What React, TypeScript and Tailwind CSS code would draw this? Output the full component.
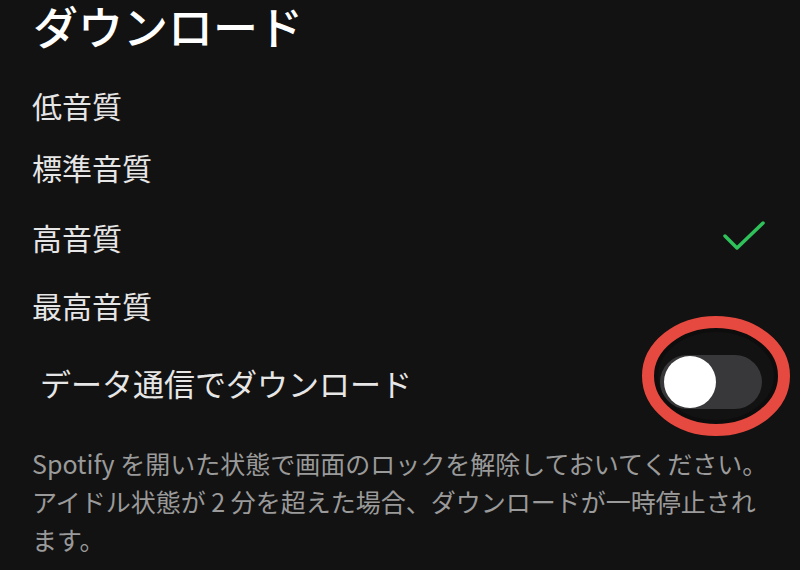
const font = {
	fontFamily: '"Noto Sans CJK JP", "Noto Sans", sans-serif',
};

const QualityRow = ({
	label,
	height,
	checked,
}: {
	label: string;
	height: string;
	checked?: boolean;
}) => (
	<div className={`flex items-center justify-between pr-[34px] ${height}`}>
		<span className="text-[30px] leading-none text-[#e6e6e6]">{label}</span>
		{checked ? (
			<svg width="44" height="34" viewBox="0 0 44 34" fill="none">
				<path
					d="M3 16 L15 28 L41 3"
					stroke="#2fc15a"
					strokeWidth="3.5"
					strokeLinecap="round"
					strokeLinejoin="round"
				/>
			</svg>
		) : null}
	</div>
);

const App = () => {
	return (
		<div
			className="h-[570px] w-[800px] overflow-hidden bg-[#121212]"
			style={font}
		>
			<div className="mb-[22px] h-[52px] pl-[33px] text-[45px] leading-[52px] font-medium text-white">
				ダウンロード
			</div>
			<div className="pl-8">
				<QualityRow label="低音質" height="h-[62px]" />
				<QualityRow label="標準音質" height="h-[62px]" />
				<QualityRow label="高音質" height="h-[78px]" checked />
				<QualityRow label="最高音質" height="h-[58px]" />
				<div className="flex h-[96px] items-center justify-between pr-[38px]">
					<span className="pl-2 text-[31px] leading-none text-[#e6e6e6]">
						データ通信でダウンロード
					</span>
					<div className="relative">
						<div className="flex h-[54px] w-[102px] items-center rounded-full bg-[#38383a] pl-[4px]">
							<div className="h-[52px] w-[52px] rounded-full bg-white" />
						</div>
						<svg
							className="pointer-events-none absolute -top-[42px] -left-[20px]"
							width="152"
							height="126"
							viewBox="0 0 152 126"
							fill="none"
						>
							<ellipse
								cx="76"
								cy="63"
								rx="66"
								ry="52"
								stroke="#0a0a0a"
								strokeWidth="16"
								opacity="0.6"
							/>
							<ellipse
								cx="76"
								cy="63"
								rx="68"
								ry="54"
								stroke="#e6493f"
								strokeWidth="12"
							/>
						</svg>
					</div>
				</div>
				<div className="mt-[14px] text-[25px] leading-[38px] whitespace-nowrap text-[#9a9a9a]">
					<div>Spotify を開いた状態で画面のロックを解除しておいてください。</div>
					<div>アイドル状態が 2 分を超えた場合、ダウンロードが一時停止され</div>
					<div>ます。</div>
				</div>
			</div>
		</div>
	);
};

export default App;
